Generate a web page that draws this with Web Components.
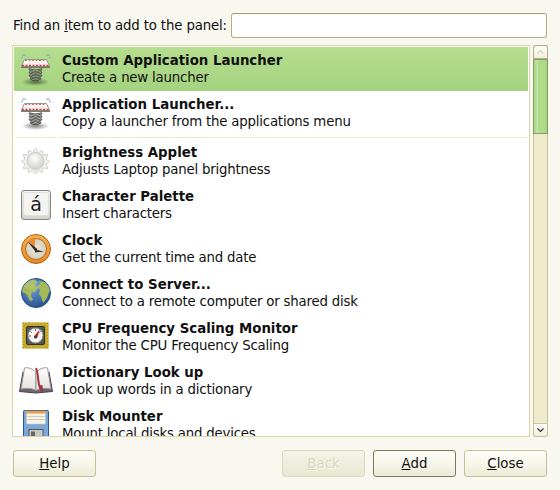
<!DOCTYPE html>
<html><head><meta charset="utf-8">
<style>
html,body{margin:0;padding:0;background:#f9f8f0;width:560px;height:490px;overflow:hidden}
body{font:13.33px "DejaVu Sans",sans-serif;color:#101010}
</style></head><body>
<add-dialog>
  <list-row slot="rows" selected name="Custom Application Launcher" desc="Create a new launcher" icon="launcher"></list-row>
  <list-row slot="rows" name="Application Launcher..." desc="Copy a launcher from the applications menu" icon="launcher"></list-row>
  <list-sep slot="rows"></list-sep>
  <list-row slot="rows" name="Brightness Applet" desc="Adjusts Laptop panel brightness" icon="sun"></list-row>
  <list-row slot="rows" name="Character Palette" desc="Insert characters" icon="key"></list-row>
  <list-row slot="rows" name="Clock" desc="Get the current time and date" icon="clock"></list-row>
  <list-row slot="rows" name="Connect to Server..." desc="Connect to a remote computer or shared disk" icon="globe"></list-row>
  <list-row slot="rows" name="CPU Frequency Scaling Monitor" desc="Monitor the CPU Frequency Scaling" icon="cpu"></list-row>
  <list-row slot="rows" name="Dictionary Look up" desc="Look up words in a dictionary" icon="book"></list-row>
  <list-row slot="rows" name="Disk Mounter" desc="Mount local disks and devices" icon="disk"></list-row>
  <gtk-button slot="left"><u>H</u>elp</gtk-button>
  <gtk-button slot="right" disabled><u>B</u>ack</gtk-button>
  <gtk-button slot="right" focused><u>A</u>dd</gtk-button>
  <gtk-button slot="right"><u>C</u>lose</gtk-button>
</add-dialog>
<script>
const ICONS={
launcher:`<svg width="36" height="36" viewBox="0 0 36 36" fill="none">
<defs><radialGradient id="sh"><stop offset="0" stop-color="#000" stop-opacity=".5"/><stop offset="1" stop-color="#000" stop-opacity="0"/></radialGradient>
<linearGradient id="top" x1="0" y1="0" x2="0" y2="1"><stop offset="0" stop-color="#fff"/><stop offset="1" stop-color="#e6e6e0"/></linearGradient></defs>
<ellipse cx="17.500" cy="31" rx="14" ry="4" fill="url(#sh)"/>
<path d="M4 4.500q2-1.500 4 0M3 7q1-1 2-1M28 4.500q2-1.500 4 0M31 6q1 0 2 1" stroke="#7fa6c9" stroke-width="1"/>
<path d="M6.500 8.500h22l3 6.500v.5h-28V15z" fill="url(#top)" stroke="#96968f"/>
<path d="M7 9.500h21" stroke="#e26a6a" stroke-width="1.200" stroke-dasharray="2 1.500"/>
<path d="M4 14.500h27" stroke="#e03d3d" stroke-width="1.400" stroke-dasharray="2 1.500"/>
<path d="M3 16.200h29" stroke="#6e6e68" stroke-width="1.400"/>
<g stroke="#3e3e3a" stroke-width="2.400" stroke-linecap="round"><path d="M12 18.500c4 1.600 7 1.600 11 0M12 21.500c4 1.800 7 1.800 11 0M12 24.500c4 1.800 7 1.800 11 0M13 27.500c3 1.800 6 1.800 9 0"/></g>
<g stroke="#b4b4ae" stroke-width=".8" stroke-linecap="round"><path d="M12 18.500c4 1.600 7 1.600 11 0M12 21.500c4 1.800 7 1.800 11 0M12 24.500c4 1.800 7 1.800 11 0M13 27.500c3 1.800 6 1.800 9 0"/></g>
</svg>`,
sun:`<svg width="36" height="36" viewBox="0 0 36 36">
<defs><radialGradient id="su" cx=".45" cy=".35" r=".75"><stop offset="0" stop-color="#fff"/><stop offset="1" stop-color="#c6c6c2"/></radialGradient></defs>
<path d="M17.500 5l2.500 4.500 4.500-2 .5 4.500 5-.5-2 4.500 3.500 2.500-3.500 2.500 2 4.500-5-.5-.5 4.500-4.500-2-2.500 3.500-2.500-3.500-4.500 2-.5-4.500-5 .5 2-4.500-3.500-2.500 3.500-2.500-2-4.500 5 .5.5-4.500 4.500 2z" fill="#f0f0ec" stroke="#d2d2ce" stroke-linejoin="round"/>
<circle cx="17.500" cy="18" r="8.500" fill="url(#su)" stroke="#cfcfca"/></svg>`,
key:`<svg width="36" height="36" viewBox="0 0 36 36">
<defs><linearGradient id="ke" x1="0" y1="0" x2="0" y2="1"><stop offset="0" stop-color="#f4f4f2"/><stop offset="1" stop-color="#d4d4ce"/></linearGradient></defs>
<rect x="3.500" y="3.500" width="29" height="29" rx="2.500" fill="url(#ke)" stroke="#85857f"/>
<rect x="5.500" y="5.500" width="25" height="23" rx="2" fill="#f3f3f0" stroke="#e0e0db"/>
<text x="18" y="23.500" text-anchor="middle" font-family="DejaVu Sans" font-size="19" fill="#1c1c1c">á</text></svg>`,
clock:`<svg width="36" height="36" viewBox="0 0 36 36">
<defs><radialGradient id="cl" cx=".5" cy=".5" r=".6"><stop offset="0" stop-color="#ece8da"/><stop offset="1" stop-color="#cfc9b4"/></radialGradient>
<linearGradient id="ri" x1="0" y1="0" x2="0" y2="1"><stop offset="0" stop-color="#f5b050"/><stop offset="1" stop-color="#e58a28"/></linearGradient></defs>
<circle cx="18" cy="18" r="14.500" fill="url(#ri)" stroke="#b0600f"/>
<circle cx="18" cy="18" r="10.500" fill="url(#cl)" stroke="#b86a1a"/>
<path d="M17 19.500L10 10.500A11 11 0 0 1 17 7.800z" fill="#ee8a30"/>
<path d="M17.500 20.500L9.500 10.500l10 7.500z" fill="#2e2e2e"/>
<path d="M17 18.500l9 2-9 1z" fill="#2e2e2e"/></svg>`,
globe:`<svg width="36" height="36" viewBox="0 0 36 36">
<defs><radialGradient id="gl" cx=".4" cy=".3" r=".8"><stop offset="0" stop-color="#6f9fd8"/><stop offset="1" stop-color="#204a87"/></radialGradient><clipPath id="gc"><circle cx="18" cy="18" r="14"/></clipPath></defs>
<circle cx="18" cy="18" r="14.500" fill="url(#gl)" stroke="#204a87"/>
<g clip-path="url(#gc)" fill="#a4b957"><path d="M9 7l7-3 3 3-2 3 3 3-3 4-3 0-1 4 2 4-3 1-3-6-2-2-4-1 2-6z"/><path d="M21 6l9 2 4 8-3 1-2 6-4 5-2-6-2-3 1-4-3-3 3-3z"/></g>
<ellipse cx="14" cy="10" rx="8" ry="5" fill="#fff" opacity=".12"/></svg>`,
cpu:`<svg width="36" height="36" viewBox="0 0 36 36">
<rect x="5" y="4" width="25" height="25" fill="#c9a922" stroke="#8f7a15"/>
<path d="M4 6h2M4 9h2M4 12h2M4 15h2M4 18h2M4 21h2M4 24h2M4 27h2M29 6h2M29 9h2M29 12h2M29 15h2M29 18h2M29 21h2M29 24h2M29 27h2M7 3v2M10 3v2M13 3v2M16 3v2M19 3v2M22 3v2M25 3v2M28 3v2M7 28v2M10 28v2M13 28v2M16 28v2M19 28v2M22 28v2M25 28v2M28 28v2" stroke="#f0dc60" stroke-width="1"/>
<rect x="8.500" y="7.500" width="18" height="18" rx="1.500" fill="#55575a" stroke="#2e2e2e"/>
<circle cx="17.500" cy="16.500" r="7.500" fill="#f5f5f1" stroke="#8a8a86"/>
<path d="M12.500 12.500l1.200 1.200M17.500 10v1.800M22.500 12.500l-1.200 1.200M11 17h1.800" stroke="#555" stroke-width="1"/>
<path d="M16 17.500l5.500-7-2 8z" fill="#cc1f1f"/><circle cx="17.500" cy="18" r="1.500" fill="#333"/></svg>`,
book:`<svg width="36" height="36" viewBox="0 0 36 36" fill="none">
<defs><linearGradient id="pg" x1="0" y1="0" x2="0" y2="1"><stop offset="0" stop-color="#fff"/><stop offset="1" stop-color="#e2e0dc"/></linearGradient></defs>
<path d="M1.500 28.500L5 9l13 3 13-3 3.500 19.500-16.500 1.500z" fill="#6f6370" stroke="#4a414c"/>
<path d="M18 9.500C14 5 8 4 6.500 5L3 26c5-1 11-1 15 1.500z" fill="url(#pg)" stroke="#9b9590"/>
<path d="M18 9.500C22 5 28 4 29.500 5L33 26c-5-1-11-1-15 1.500z" fill="url(#pg)" stroke="#9b9590"/>
<path d="M18 5c3 7 1 12 4 20l2 3-.5-6" stroke="#a3363b" stroke-width="2"/>
</svg>`,
disk:`<svg width="36" height="36" viewBox="0 0 36 36">
<rect x="5.500" y="3.500" width="25" height="30" rx="1" fill="#7aa7da" stroke="#30588c"/>
<rect x="8.500" y="4" width="19" height="13" fill="#f6f3e8" stroke="#c9c4b2" stroke-width=".5"/>
<rect x="8.500" y="4" width="19" height="2.500" fill="#ee9a3d"/>
<path d="M9.500 9.500h17M9.500 12.500h17" stroke="#cfcab8"/>
<rect x="11" y="22.500" width="14" height="11" fill="#c9c9c4" stroke="#555"/>
<rect x="13" y="24.500" width="4" height="7" fill="#666"/></svg>`};

class ListRow extends HTMLElement{
  constructor(){super();this.attachShadow({mode:'open'});}
  connectedCallback(){
    this.shadowRoot.innerHTML=`<style>
    :host{display:flex;align-items:center;height:44px;box-sizing:border-box;padding-left:4px;color:#101010;flex:none}
    :host([selected]){background:linear-gradient(#b5de8f,#a5d27f)}
    .ic{width:36px;height:36px;flex:none;margin-right:8px}
    svg{display:block}
    .t{font-weight:bold;line-height:17px;white-space:nowrap}
    .d{line-height:17px;white-space:nowrap;letter-spacing:-.2px}
    </style><div class="ic">${ICONS[this.getAttribute('icon')]}</div>
    <div><div class="t">${this.getAttribute('name')}</div><div class="d">${this.getAttribute('desc')}</div></div>`;
  }
}
customElements.define('list-row',ListRow);

class ListSep extends HTMLElement{
  constructor(){super();this.attachShadow({mode:'open'}).innerHTML=`<style>
  :host{display:flex;height:4px;align-items:center;flex:none;padding:0 1px;gap:2px}
  div{height:1px;background:#ece8d6}
  .a{width:42px;flex:none}.b{flex:1}</style><div class="a"></div><div class="b"></div>`;}
}
customElements.define('list-sep',ListSep);

class GtkButton extends HTMLElement{
  constructor(){super();this.attachShadow({mode:'open'}).innerHTML=`<style>
  :host{display:flex;width:83px;height:27px;box-sizing:border-box;align-items:center;justify-content:center;
    border:1px solid #c8c090;border-radius:3px;background:linear-gradient(#fdfdf8,#f8f7ec 45%,#ecead7);
    color:#101010;font:13.33px "DejaVu Sans",sans-serif;flex:none}
  :host([focused]){border-color:#7e7853}
  :host([disabled]){color:#d9d6bf;background:linear-gradient(#f4f3e6,#e9e7d3);border-color:#dcd8b8;text-shadow:1px 1px 0 #fbfaf2}
  </style><span><slot></slot></span>`;}
}
customElements.define('gtk-button',GtkButton);

class GtkScrollbar extends HTMLElement{
  constructor(){super();this.attachShadow({mode:'open'}).innerHTML=`<style>
  :host{display:flex;flex-direction:column;width:15px;box-sizing:border-box;border:1px solid #c9c397;border-top:0;border-bottom:0;background:#eeebcc;flex:none;border-radius:3px}
  .btn{height:14px;box-sizing:border-box;margin:0 -1px;border:1px solid #c9c397;display:flex;align-items:center;justify-content:center;background:linear-gradient(#fdfdf7,#f1efdc);flex:none}
  .up{border-radius:3px 3px 0 0;border-color:#b3ad82}
  .down{border-radius:0 0 3px 3px;margin-top:auto}
  .thumb{height:75px;margin:0 -1px;box-sizing:border-box;border:1px solid #8d9a63;background:linear-gradient(90deg,#a9d484,#c4e5a6 30%,#addb88 35%,#addb88 85%,#9fcc7b);flex:none}
  svg{display:block}
  </style><div class="btn up"><svg width="9" height="6"><path d="M1.500 4.500L4.500 1.500l3 3" fill="none" stroke="#d5d2bd" stroke-width="1.200"/></svg></div>
  <div class="thumb"></div>
  <div class="btn down"><svg width="9" height="6"><path d="M1.500 1.500L4.500 4.500l3-3" fill="none" stroke="#333" stroke-width="1.200"/></svg></div>`;}
}
customElements.define('gtk-scrollbar',GtkScrollbar);

class AddDialog extends HTMLElement{
  constructor(){super();this.attachShadow({mode:'open'}).innerHTML=`<style>
  :host{display:flex;flex-direction:column;width:560px;height:490px;box-sizing:border-box;padding:13px 13px 13px 12px}
  .find{display:flex;align-items:center;height:25px;flex:none;padding-left:1px}
  .find label{width:218px;white-space:nowrap;flex:none;letter-spacing:-.15px}
  .entry{flex:1;height:25px;box-sizing:border-box;background:#fff;border:1px solid #b5ae7e;border-top-color:#a49c68;border-radius:3px}
  .mid{display:flex;gap:3px;margin-top:7px;height:392px;flex:none;margin-right:-1px}
  .list{flex:1;box-sizing:border-box;border:1px solid #dcd6a8;background:#fff;padding:1px;overflow:hidden;display:flex;flex-direction:column;min-width:0}
  .foot{display:flex;justify-content:space-between;margin-top:13px;padding-left:1px}
  .r{display:flex;gap:8px}
  </style>
  <div class="find"><label>Find an <u>i</u>tem to add to the panel:</label><div class="entry"></div></div>
  <div class="mid"><div class="list"><slot name="rows"></slot></div><gtk-scrollbar></gtk-scrollbar></div>
  <div class="foot"><slot name="left"></slot><div class="r"><slot name="right"></slot></div></div>`;}
}
customElements.define('add-dialog',AddDialog);
</script>
</body></html>
